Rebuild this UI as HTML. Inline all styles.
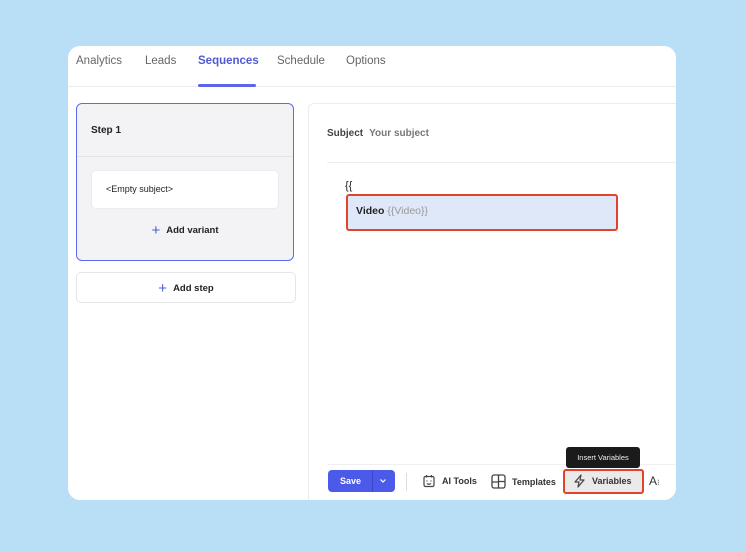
<!DOCTYPE html>
<html><head><meta charset="utf-8"><style>
*{margin:0;padding:0;box-sizing:border-box}
body{width:746px;height:551px;background:#b9dff6;font-family:"Liberation Sans",sans-serif;position:relative;overflow:hidden;color:#222}
.card{position:absolute;left:68px;top:46px;width:608px;height:454px;background:#fff;border-radius:12px;overflow:hidden}
.tabs{position:absolute;left:0;top:0;width:608px;height:41px;border-bottom:1px solid #ececee}
.tab{position:absolute;top:8px;font-size:11.5px;color:#666}
.tab.a{color:#4f5bd5;font-weight:bold}
.ul{position:absolute;left:130px;top:38px;width:58px;height:3px;background:#5b67e8;border-radius:2px}
.step{position:absolute;left:8px;top:57px;width:218px;height:158px;background:#f3f3f5;border:1.5px solid #5b6af0;border-radius:6px}
.step .h{height:53px;border-bottom:1px solid #e4e4e8;padding:21px 14px;font-size:10px;font-weight:bold}
.subj{position:absolute;left:14px;top:66px;width:188px;height:39px;background:#fff;border:1px solid #ececee;border-radius:5px;font-size:9px;padding:13px 14px}
.addv{position:absolute;left:0;width:100%;top:118px;text-align:center;font-size:9.5px;font-weight:bold}
.plus{color:#4f5bd5;font-size:15px;font-weight:normal;vertical-align:-2px;margin-right:6px}
.adds{position:absolute;left:8px;top:226px;width:220px;height:31px;border:1px solid #e6e6ea;border-radius:5px;text-align:center;font-size:9.5px;font-weight:bold;padding-top:7px}
.panel{position:absolute;left:240px;top:57px;width:380px;height:410px;border:1px solid #ececee;border-radius:6px 0 0 0}
.sl{position:absolute;left:18px;top:24px;font-size:10px;color:#555}
.sl b{color:#444;margin-right:6px}
.sl span{color:#777;font-weight:bold}
.hr{position:absolute;left:18px;top:58px;width:360px;height:1px;background:#ececf3}
.br{position:absolute;left:36px;top:76px;font-size:11px}
.dd{position:absolute;left:37px;top:90px;width:272px;height:37px;background:#dfe8f8;border:2px solid #e0442a;border-radius:3px;font-size:10.5px;padding:9px 8px}
.dd span{color:#999;font-weight:normal}
.tb{position:absolute;border-top:1px solid #f0f0f2}
.save{position:absolute;left:260px;top:424px;width:67px;height:22px;background:#4b5ae8;border-radius:4px;color:#fff;font-size:9px;font-weight:bold}
.tool{position:absolute;top:428px;font-size:9px;font-weight:bold;color:#333;display:flex;align-items:center;gap:6px}
.tip{position:absolute;left:498px;top:401px;width:74px;height:21px;background:#1b1b1b;border-radius:3px;color:#eee;font-size:7.5px;text-align:center;padding-top:6px}
.var{position:absolute;left:495px;top:423px;width:81px;height:25px;border:2px solid #e0442a;border-radius:3px;background:#eaeaea}
</style></head><body>
<div class="card">
 <div class="tabs">
  <div class="tab" style="left:8px;top:9px">Analytics</div>
  <div class="tab" style="left:77px;top:9px">Leads</div>
  <div class="tab a" style="left:130px;top:9px">Sequences</div>
  <div class="tab" style="left:209px;top:9px">Schedule</div>
  <div class="tab" style="left:278px;top:9px">Options</div>
  <div class="ul"></div>
 </div>
 <div class="step"><div class="h">Step 1</div>
  <div class="subj">&lt;Empty subject&gt;</div>
  <div class="addv"><span class="plus">+</span>Add variant</div>
 </div>
 <div class="adds"><span class="plus">+</span>Add step</div>
 <div class="panel">
  <div class="sl"><b>Subject</b><span>Your subject</span></div>
  <div class="hr"></div>
  <div class="br">{{</div>
  <div class="dd"><b>Video</b> <span>{{Video}}</span></div>
 </div>
 <div class="tb" style="top:418px;left:259px;width:350px"></div>
 <div class="save"><span style="position:absolute;left:12px;top:6px">Save</span><span style="position:absolute;left:44px;top:0;width:1px;height:22px;background:#3a47c8"></span><svg style="position:absolute;left:51px;top:8px" width="8" height="6" viewBox="0 0 8 6"><path d="M1.5 1.5L4 4l2.5-2.5" stroke="#fff" stroke-width="1.2" fill="none"/></svg></div>
 <div style="position:absolute;left:338px;top:427px;width:1px;height:18px;background:#ddd"></div>
 <div class="tool" style="left:354px"><svg width="14" height="14" viewBox="0 0 14 14" fill="none" stroke="#444" stroke-width="1.2"><rect x="2" y="2.5" width="10" height="10" rx="1.5"/><path d="M4.5 1v2.5M9.5 1v2.5M5 6.5v1M9 6.5v1M5 9.5q2 1.5 4 0"/></svg>AI Tools</div>
 <div class="tool" style="left:423px"><svg width="15" height="15" viewBox="0 0 15 15" fill="none" stroke="#444" stroke-width="1.3"><rect x="1" y="1" width="13" height="13" rx="2"/><path d="M7.5 1v13M7.5 7.5h6.5M1 8h6.5"/></svg>Templates</div>
 <div class="var"></div>
 <div class="tool" style="left:505px"><svg width="13" height="14" viewBox="0 0 13 14" fill="none" stroke="#444" stroke-width="1.2"><path d="M8 1L2 8h4l-1 5 6-7H7z" stroke-linejoin="round"/></svg>Variables</div>
 <div class="tip">Insert Variables</div>
 <div style="position:absolute;left:581px;top:428px;font-size:12px;color:#333">A<span style="font-size:8px">⁝</span></div>
</div>
</body></html>
